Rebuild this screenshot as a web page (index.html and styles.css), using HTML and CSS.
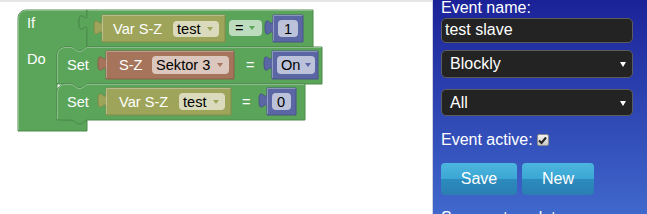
FILE: index.html
```html
<!DOCTYPE html>
<html lang="en">
<head>
<meta charset="utf-8">
<title>Event editor</title>
<link rel="stylesheet" href="styles.css">
</head>
<body>
<div class="page">
  <div class="workspace">
    <svg class="blocks" width="432" height="212" viewBox="0 2 432 212" xmlns="http://www.w3.org/2000/svg">
      <!-- If block -->
      <path class="b-green" d="M18,18 A8,8 0 0 1 26,10 H87 V15 c0,10 -8,-8 -8,7.5 s8,-2.5 8,7.5 V47 l-6,4 -3,0 -6,-4 H65 a8,8 0 0 0 -8,8 V112 a8,8 0 0 0 8,8 H87 V131 H18 Z"/>
      <path class="hl" d="M18.5,130 V18 A7.5,7.5 0 0 1 26,10.5 H86"/>
      <text class="lbl" x="27" y="28">If</text>
      <text class="lbl" x="27" y="64">Do</text>

      <!-- Compare block -->
      <path class="b-green" d="M87,10 H313 V47 H87 V30 c0,-10 -8,8 -8,-7.5 s8,2.5 8,-7.5 Z"/>
      <path class="hl" d="M87.5,10.5 H312.5"/>

      <!-- Var S-Z test (if row) -->
      <path class="b-olive" d="M102,15 H225 V42 H102 V35 c0,-10 -8,8 -8,-7.5 s8,2.5 8,-7.5 Z"/>
      <path class="hl" d="M102.5,41 V15.5 H224.5"/>
      <text class="lbl" x="113" y="34">Var S-Z</text>
      <rect class="f-olive" x="173" y="21" width="46" height="16" rx="4"/>
      <text class="ftxt" x="177" y="34">test</text>
      <path class="arr-olive" d="M207,27 h6 l-3,4 z"/>

      <!-- = dropdown -->
      <rect class="f-green" x="229" y="20" width="33" height="16" rx="4"/>
      <text class="ftxt" x="235" y="33">=</text>
      <path class="arr-green" d="M249,26 h6 l-3,4 z"/>

      <!-- number 1 -->
      <path class="b-blue" d="M273,15 H303 V42 H273 V35 c0,-10 -8,8 -8,-7.5 s8,2.5 8,-7.5 Z"/>
      <path class="hl" d="M273.5,41 V15.5 H302.5"/>
      <rect class="f-blue" x="278" y="20" width="20" height="17" rx="4"/>
      <text class="ftxt" x="284" y="34">1</text>

      <!-- Set 1 -->
      <path class="b-green" d="M57,55 A8,8 0 0 1 65,47 H72 l6,4 3,0 6,-4 H322 V84 H87 l-6,4 -3,0 -6,-4 H57 Z"/>
      <path class="hl" d="M57.5,83 V55 A7.5,7.5 0 0 1 65,47.5 H72 l6,4 3,0 6,-4 H321.5"/>
      <text class="lbl" x="67" y="70">Set</text>
      <path class="b-brown" d="M106,51 H234 V79 H106 V71 c0,-10 -8,8 -8,-7.5 s8,2.5 8,-7.5 Z"/>
      <path class="hl" d="M106.5,78 V51.5 H233.5"/>
      <text class="lbl" x="119" y="70">S-Z</text>
      <rect class="f-brown" x="152" y="56" width="77" height="18" rx="4"/>
      <text class="ftxt" x="156" y="70">Sektor 3</text>
      <path class="arr-brown" d="M217,63 h6 l-3,4 z"/>
      <text class="lbl" x="246" y="70">=</text>
      <path class="b-blue" d="M272,51 H318 V79 H272 V71 c0,-10 -8,8 -8,-7.5 s8,2.5 8,-7.5 Z"/>
      <path class="hl" d="M272.5,78 V51.5 H317.5"/>
      <rect class="f-blue" x="277" y="56" width="38" height="18" rx="4"/>
      <text class="ftxt" x="281" y="70">On</text>
      <path class="arr-blue" d="M305,63 h6 l-3,4 z"/>

      <!-- Set 2 -->
      <path class="b-green" d="M57,92 A8,8 0 0 1 65,84 H72 l6,4 3,0 6,-4 H305 V120 H87 l-6,4 -3,0 -6,-4 H57 Z"/>
      <path class="hl" d="M57.5,119 V92 A7.5,7.5 0 0 1 65,84.5 H72 l6,4 3,0 6,-4 H304.5"/>
      <text class="lbl" x="67" y="107">Set</text>
      <path class="b-olive" d="M106,88 H231 V115 H106 V108 c0,-10 -8,8 -8,-7.5 s8,2.5 8,-7.5 Z"/>
      <path class="hl" d="M106.5,114 V88.5 H230.5"/>
      <text class="lbl" x="119" y="107">Var S-Z</text>
      <rect class="f-olive" x="179" y="93" width="46" height="17" rx="4"/>
      <text class="ftxt" x="183" y="107">test</text>
      <path class="arr-olive" d="M213,100 h6 l-3,4 z"/>
      <text class="lbl" x="242" y="107">=</text>
      <path class="b-blue" d="M267,88 H296 V115 H267 V108 c0,-10 -8,8 -8,-7.5 s8,2.5 8,-7.5 Z"/>
      <path class="hl" d="M267.5,114 V88.5 H295.5"/>
      <rect class="f-blue" x="272" y="93" width="19" height="17" rx="4"/>
      <text class="ftxt" x="277" y="107">0</text>
    </svg>
  </div>
  <aside class="panel">
    <div class="label">Event name:</div>
    <div class="textbox">test slave</div>
    <div class="select select-first">Blockly<span class="caret"></span></div>
    <div class="select select-second">All<span class="caret"></span></div>
    <div class="active-row">Event active:<span class="check"><svg width="9" height="9" viewBox="0 0 9 9"><path d="M1,4.5 L3.5,7 L8,1.5" fill="none" stroke="#222" stroke-width="2"/></svg></span></div>
    <div class="buttons">
      <span class="btn btn-save">Save</span>
      <span class="btn btn-new">New</span>
    </div>
    <div class="label label-cut">Save as template:</div>
  </aside>
</div>
</body>
</html>
```

FILE: styles.css
```css
* { box-sizing: border-box; }
html, body { margin: 0; padding: 0; }
body {
  width: 647px;
  height: 214px;
  overflow: hidden;
  font-family: "Liberation Sans", Arial, sans-serif;
  background: #fff;
}
.page {
  display: flex;
  height: 214px;
  overflow: hidden;
}
.workspace {
  width: 432px;
  flex: none;
  border-top: 2px solid #e6e6e6;
  background: #fff;
}
.blocks { display: block; }
.blocks text { font-family: "Liberation Sans", Arial, sans-serif; font-size: 14.6px; }
.blocks .lbl { fill: #fff; }
.blocks .ftxt { fill: #000; }
.b-green { fill: #5ba55b; stroke: #4a8a4a; stroke-width: 1; }
.b-olive { fill: #9ea55b; stroke: #858a4a; stroke-width: 1; }
.b-brown { fill: #a5745b; stroke: #8a5f4a; stroke-width: 1; }
.b-blue { fill: #5b67a5; stroke: #4a548a; stroke-width: 1; }
.hl { fill: none; stroke: rgba(255,255,255,0.35); stroke-width: 1; }
.f-olive { fill: #dadbbd; }
.f-green { fill: #bddbbd; }
.f-brown { fill: #dbc7bd; }
.f-blue { fill: #bdc2db; }
.arr-olive { fill: #9ea55b; }
.arr-green { fill: #5ba55b; }
.arr-brown { fill: #a5745b; }
.arr-blue { fill: #5b67a5; }

.panel {
  width: 215px;
  height: 214px;
  overflow: hidden;
  flex: none;
  border-left: 1px solid #cfd2de;
  background: linear-gradient(#1b2298, #4068cc);
  padding: 0 14px 0 8px;
  color: #fff;
  font-size: 16px;
}
.label {
  margin-top: -1px;
  line-height: 18px;
  white-space: nowrap;
}
.textbox {
  margin-top: 1px;
  height: 25px;
  background: #232323;
  border: 1px solid #5c5c5c;
  border-radius: 5px;
  padding-left: 3px;
  line-height: 22px;
}
.select {
  position: relative;
  height: 28px;
  background: #232323;
  border: 1px solid #5c5c5c;
  border-radius: 5px;
  padding-left: 8px;
  line-height: 26px;
}
.select-first { margin-top: 7px; }
.select-second { margin-top: 11px; height: 27px; line-height: 25px; }
.caret {
  position: absolute;
  right: 6px;
  top: 50%;
  margin-top: -2px;
  width: 0;
  height: 0;
  border-left: 3px solid transparent;
  border-right: 3px solid transparent;
  border-top: 5px solid #fff;
}
.active-row {
  margin-top: 15px;
  height: 18px;
  line-height: 18px;
  display: flex;
  align-items: center;
  gap: 4px;
}
.check {
  width: 12px;
  height: 12px;
  border: 1px solid #8d8d8d;
  border-radius: 2px;
  background: linear-gradient(#f2f2f2, #c9c9c9);
  display: flex;
  align-items: center;
  justify-content: center;
}
.check svg { display: block; }
.buttons {
  margin-top: 14px;
  display: flex;
  gap: 5px;
}
.btn {
  height: 32px;
  border-radius: 4px;
  line-height: 32px;
  text-align: center;
  color: #fff;
  background: linear-gradient(#4cb6de 0%, #3ba6d4 50%, #2c8bbd 50%, #2a7eb2 100%);
}
.btn-save { width: 76px; }
.btn-new { width: 72px; }
.label-cut { margin-top: 14px; }
```
